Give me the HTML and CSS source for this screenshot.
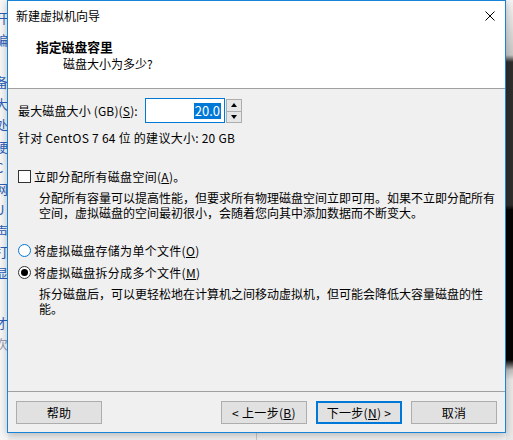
FILE: index.html
```html
<!DOCTYPE html>
<html lang="zh-CN">
<head>
    <meta charset="UTF-8">
    <title>新建虚拟机向导</title>
    <link rel="stylesheet" href="styles.css">
</head>
<body>
    <!-- page behind the dialog -->
    <div class="behind">
        <ul class="side-links">
            <li style="top: 8px">开</li>
            <li style="top: 30px">编</li>
            <li style="top: 72px">备</li>
            <li style="top: 94px">大</li>
            <li style="top: 115px">处</li>
            <li style="top: 137px">硬</li>
            <li style="top: 158px">C</li>
            <li style="top: 179px">网</li>
            <li style="top: 200px">U</li>
            <li style="top: 221px">声</li>
            <li style="top: 242px">打</li>
            <li style="top: 263px">显</li>
            <li style="top: 313px">才</li>
            <li class="dim" style="top: 334px">次</li>
        </ul>
        <div class="dark-strip"></div>
        <div class="below-line"></div>
    </div>

    <div class="dialog">
        <div class="titlebar">
            <span class="title">新建虚拟机向导</span>
            <svg class="close" width="10" height="10" viewBox="0 0 10 10">
                <path d="M0.5 0.5 L9.5 9.5 M9.5 0.5 L0.5 9.5" stroke="#000" stroke-width="1" fill="none"/>
            </svg>
        </div>

        <div class="header">
            <div class="header-title">指定磁盘容里</div>
            <div class="header-sub">磁盘大小为多少?</div>
        </div>

        <div class="content">
            <div class="size-row">
                <label>最大磁盘大小 (GB)(<u>S</u>):</label>
                <div class="spin-input">
                    <div class="spin-field"><span class="sel">20.0</span></div>
                    <div class="spin-btns">
                        <div class="spin-btn"><span class="tri-up"></span></div>
                        <div class="spin-btn"><span class="tri-down"></span></div>
                    </div>
                </div>
            </div>
            <div class="hint">针对 CentOS 7 64 位 的建议大小: 20 GB</div>

            <div class="option opt-check">
                <span class="checkbox"></span>
                <span>立即分配所有磁盘空间(<u>A</u>)。</span>
            </div>
            <p class="desc">分配所有容量可以提高性能，但要求所有物理磁盘空间立即可用。如果不立即分配所有空间，虚拟磁盘的空间最初很小，会随着您向其中添加数据而不断变大。</p>

            <div class="option opt-radio1">
                <span class="radio focus"></span>
                <span>将虚拟磁盘存储为单个文件(<u>O</u>)</span>
            </div>
            <div class="option opt-radio2">
                <span class="radio checked"></span>
                <span>将虚拟磁盘拆分成多个文件(<u>M</u>)</span>
            </div>
            <p class="desc">拆分磁盘后，可以更轻松地在计算机之间移动虚拟机，但可能会降低大容量磁盘的性能。</p>
        </div>

        <div class="footer">
            <button class="btn">帮助</button>
            <div class="spacer"></div>
            <button class="btn">&lt; 上一步(<u>B</u>)</button>
            <button class="btn default">下一步(<u>N</u>) &gt;</button>
            <button class="btn">取消</button>
        </div>
    </div>
</body>
</html>
```

FILE: styles.css
```css
* {
    margin: 0;
    padding: 0;
    box-sizing: border-box;
}
body {
    font-family: "Noto Sans CJK SC", "Noto Sans", sans-serif;
    font-size: 12px;
    color: #000;
    background: #f0f0f0;
    width: 513px;
    height: 440px;
    overflow: hidden;
    position: relative;
}
u {
    text-decoration: underline;
    text-underline-offset: 1px;
}

/* background page */
.behind {
    position: absolute;
    inset: 0;
}
.side-links {
    list-style: none;
    position: absolute;
    left: 0;
    top: 0;
    width: 8px;
    height: 440px;
    background: #f7f7f7;
    overflow: hidden;
}
.side-links li {
    position: absolute;
    left: -5px;
    font-size: 13px;
    color: #2d5fb8;
}
.side-links li.dim {
    color: #9a9ab0;
}
.dark-strip {
    position: absolute;
    left: 506px;
    top: 0;
    width: 7px;
    height: 440px;
    background: linear-gradient(#f4f4f4 0, #c8c8c8 55px, #2e2e2e 62px, #2e2e2e 205px, #050505 210px, #050505 360px, #bdbdbd 370px, #e8e8e8 380px);
}
.below-line {
    position: absolute;
    left: 256px;
    top: 432px;
    width: 1px;
    height: 8px;
    background: #c8c8c8;
}

/* dialog window */
.dialog {
    position: absolute;
    left: 7px;
    top: 0;
    width: 499px;
    height: 433px;
    border: 1px solid #1883d7;
    background: #f0f0f0;
    display: flex;
    flex-direction: column;
    box-shadow: 0 2px 8px rgba(0, 0, 0, 0.25);
}
.titlebar {
    height: 30px;
    background: #fff;
    display: flex;
    align-items: center;
    padding-left: 8px;
    padding-right: 10px;
    flex-shrink: 0;
}
.title {
    flex: 1;
    line-height: 16px;
}
.close {
    display: block;
}
.header {
    height: 58px;
    background: #fff;
    border-bottom: 1px solid #a0a0a0;
    padding-top: 7px;
    flex-shrink: 0;
}
.header-title {
    font-weight: bold;
    font-size: 12.8px;
    line-height: 17px;
    padding-left: 28px;
}
.header-sub {
    line-height: 17px;
    padding-left: 55px;
}

.content {
    flex: 1;
    padding-left: 10px;
    padding-right: 0;
}
.size-row {
    display: flex;
    align-items: center;
    margin-top: 9px;
    height: 25px;
}
.size-row label {
    width: 127px;
    letter-spacing: 0.15px;
}
.spin-input {
    display: flex;
    height: 25px;
}
.spin-field {
    width: 80px;
    height: 25px;
    border: 1px solid #0078d7;
    background: #fff;
    display: flex;
    align-items: center;
    justify-content: flex-end;
    padding-right: 3px;
    font-size: 13px;
}
.sel {
    background: #0078d7;
    color: #fff;
    line-height: 16px;
    padding: 0 1px;
}
.spin-btns {
    margin-left: 1px;
    width: 16px;
    height: 24px;
    margin-top: 1px;
    display: flex;
    flex-direction: column;
    gap: 1px;
    border: 1px solid #adadad;
    background: #adadad;
}
.spin-btn {
    flex: 1;
    background: #e6e6e6;
    display: flex;
    align-items: center;
    justify-content: center;
}
.tri-up, .tri-down {
    width: 0;
    height: 0;
    border-left: 3.5px solid transparent;
    border-right: 3.5px solid transparent;
}
.tri-up {
    border-bottom: 4px solid #000;
}
.tri-down {
    border-top: 4px solid #000;
}
.hint {
    margin-top: 7px;
    line-height: 16px;
    letter-spacing: 0.25px;
}

.option {
    display: flex;
    align-items: center;
    height: 16px;
    gap: 3px;
    letter-spacing: 0.3px;
}
.opt-check {
    margin-top: 22px;
}
.opt-radio1 {
    margin-top: 22px;
}
.opt-radio2 {
    margin-top: 6px;
}
.checkbox {
    width: 13px;
    height: 13px;
    border: 1px solid #333;
    background: #fff;
    flex-shrink: 0;
}
.radio {
    width: 13px;
    height: 13px;
    border-radius: 50%;
    border: 1px solid #333;
    background: #fff;
    flex-shrink: 0;
    display: flex;
    align-items: center;
    justify-content: center;
}
.radio.focus {
    border-color: #0078d7;
}
.radio.checked::after {
    content: '';
    width: 7px;
    height: 7px;
    border-radius: 50%;
    background: #000;
}
.desc {
    margin-top: 6px;
    padding-left: 21px;
    width: 480px;
    line-height: 15px;
    letter-spacing: 0;
}

.footer {
    height: 41px;
    border-top: 1px solid #a0a0a0;
    display: flex;
    align-items: flex-start;
    padding: 9px 8px 0 8px;
    gap: 9px;
    flex-shrink: 0;
}
.spacer {
    flex: 1;
}
.btn {
    width: 86px;
    height: 23px;
    font-family: inherit;
    font-size: 12px;
    color: #000;
    background: #e1e1e1;
    border: 1px solid #adadad;
    display: flex;
    align-items: center;
    justify-content: center;
    letter-spacing: 0.3px;
}
.btn.default {
    border: 2px solid #0078d7;
}
```
